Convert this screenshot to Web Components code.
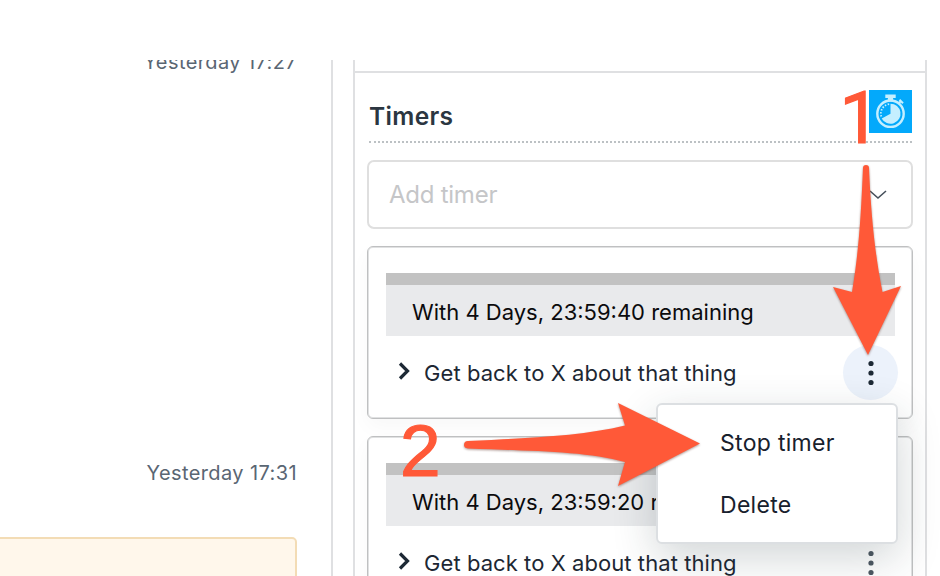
<!DOCTYPE html>
<html lang="en">
<head>
<meta charset="utf-8">
<title>Timers</title>
<style>
    body {
        margin: 0;
        background: #fff;
        font-family: Inter, "Liberation Sans", sans-serif;
        color: #1d2733;
    }
</style>
</head>
<body>
<timer-app></timer-app>
<script>
class MessageTime extends HTMLElement {
    constructor() {
        super();
        this.attachShadow({mode: 'open'}).innerHTML = `
        <style>
            :host {
                display: block;
                height: 28px;
                line-height: 28px;
                font-size: 20px;
                letter-spacing: 0.4px;
                color: #5a6673;
                text-align: right;
                white-space: nowrap;
            }
        </style>
        <slot></slot>`;
    }
}
customElements.define('message-time', MessageTime);

class MessageList extends HTMLElement {
    constructor() {
        super();
        this.attachShadow({mode: 'open'}).innerHTML = `
        <style>
            :host {
                display: flex;
                flex-direction: column;
                box-sizing: border-box;
                width: 333px;
                padding-right: 34px;
                border-right: 2px solid #dfe0e2;
            }
            .first { margin-top: -12px; }
            .second { margin-top: 383px; margin-bottom: 50px; }
            .note {
                box-sizing: border-box;
                height: 60px;
                margin-left: -10px;
                flex: none;
                background: #fff7eb;
                border: 2px solid #f3dcb5;
                border-radius: 5px;
            }
        </style>
        <message-time class="first">Yesterday 17:27</message-time>
        <message-time class="second">Yesterday 17:31</message-time>
        <div class="note"></div>`;
    }
}
customElements.define('message-list', MessageList);

class StopwatchIcon extends HTMLElement {
    constructor() {
        super();
        this.attachShadow({mode: 'open'}).innerHTML = `
        <style>
            :host { display: block; width: 43px; height: 43px; background: #03a9fb; }
            svg { display: block; }
        </style>
        <svg width="43" height="43" viewBox="0 0 43 43" fill="none">
            <path d="M16.300 4.500h10.400v3.500h-2.600v3.500h-5.200v-3.500h-2.600z" fill="#c5efff"/>
            <path d="M29.500 13.500l2.500-2.500M30.500 9.800l3.500 3.500" stroke="#c5efff" stroke-width="2"/>
            <circle cx="21.500" cy="23.700" r="13.200" stroke="#c5efff" stroke-width="2.400"/>
            <path d="M21.500 23.700V13.700a10 10 0 1 1-8.800 14.700z" fill="#c5efff"/>
            <path d="M12.300 26.500a9.600 9.600 0 0 1 9.200-12.500" stroke="#c5efff" stroke-width="1.800" stroke-dasharray="1.500 1.500"/>
        </svg>`;
    }
}
customElements.define('stopwatch-icon', StopwatchIcon);

class TimerSelect extends HTMLElement {
    constructor() {
        super();
        this.attachShadow({mode: 'open'}).innerHTML = `
        <style>
            :host {
                display: flex;
                align-items: center;
                justify-content: space-between;
                box-sizing: border-box;
                height: 69px;
                padding: 0 24px 0 20px;
                border: 2px solid #dfdfdf;
                border-radius: 7px;
                font-size: 24px;
                letter-spacing: -0.25px;
                color: #c5c6c8;
            }
        </style>
        <span><slot></slot></span>
        <svg width="18" height="10" viewBox="0 0 18 10" fill="none" stroke="#46505b" stroke-width="1.600"><path d="M1 1l8 7 8-7"/></svg>`;
    }
}
customElements.define('timer-select', TimerSelect);

class MoreButton extends HTMLElement {
    constructor() {
        super();
        this.attachShadow({mode: 'open'}).innerHTML = `
        <style>
            :host {
                display: grid;
                place-items: center;
                width: 55px;
                height: 55px;
                border-radius: 50%;
                color: #4d5862;
            }
            :host([active]) { background: #ecf2fb; color: #1d2935; }
        </style>
        <svg width="8" height="26" viewBox="0 0 8 26" fill="currentColor">
            <circle cx="4" cy="3.500" r="2.600"/><circle cx="4" cy="13" r="2.600"/><circle cx="4" cy="22.500" r="2.600"/>
        </svg>`;
    }
}
customElements.define('more-button', MoreButton);

class TimerCard extends HTMLElement {
    constructor() {
        super();
        this.attachShadow({mode: 'open'}).innerHTML = `
        <style>
            :host {
                display: block;
                box-sizing: border-box;
                height: 173px;
                flex: none;
                padding: 26px 14px 0 18px;
                border: 1px solid #bfc0c1;
                border-radius: 6px;
                background: #fff;
                box-shadow: inset 0 0 0 1px #e0e1e2, 0 8px 20px rgba(0, 0, 0, 0.03);
            }
            .remaining {
                box-sizing: border-box;
                height: 63px;
                margin-right: 3px;
                padding-left: 26px;
                border-top: 12px solid #c2c2c2;
                background: #e9eaec;
                color: #0b0b0d;
                font-size: 22px;
                line-height: 54px;
                white-space: nowrap;
            }
            .row {
                display: flex;
                align-items: center;
                height: 55px;
                margin-top: 9px;
                padding-left: 11px;
                font-size: 22px;
                letter-spacing: 0.07px;
                white-space: nowrap;
            }
            .row svg { margin: -4px 13px 0 0; }
            more-button { margin-left: auto; }
        </style>
        <div class="remaining"><slot name="remaining"></slot></div>
        <div class="row">
            <svg width="14" height="20" viewBox="0 0 14 20" fill="none" stroke="#1d2935" stroke-width="3.200"><path d="M3 2.500l7.500 7.500-7.500 7.500"/></svg>
            <span><slot></slot></span>
            <more-button></more-button>
        </div>`;
    }
    connectedCallback() {
        this.shadowRoot.querySelector('more-button').toggleAttribute('active', this.hasAttribute('active'));
    }
}
customElements.define('timer-card', TimerCard);

class TimerPanel extends HTMLElement {
    constructor() {
        super();
        this.attachShadow({mode: 'open'}).innerHTML = `
        <style>
            :host {
                display: block;
                box-sizing: border-box;
                width: 574px;
                margin-left: 20px;
                padding-top: 11px;
                border: 2px solid #dfe0e2;
                border-width: 0 2px;
            }
            section {
                display: flex;
                flex-direction: column;
                gap: 17px;
                padding: 17px 12px 0;
                border-top: 2px solid #dfe0e2;
            }
            header {
                display: flex;
                justify-content: space-between;
                box-sizing: border-box;
                height: 53px;
                margin: 0 1px 0 2px;
                border-bottom: 2px dotted #bcc1c4;
            }
            h2 {
                margin: 0;
                font-size: 24.500px;
                letter-spacing: 0.35px;
                line-height: 52px;
                font-weight: 600;
                color: #2b3641;
            }
        </style>
        <section>
            <header><h2>Timers</h2><stopwatch-icon></stopwatch-icon></header>
            <slot></slot>
        </section>`;
    }
}
customElements.define('timer-panel', TimerPanel);

class TimerMenu extends HTMLElement {
    constructor() {
        super();
        this.attachShadow({mode: 'open'}).innerHTML = `
        <style>
            :host {
                position: absolute;
                left: 656px;
                top: 403px;
                box-sizing: border-box;
                width: 242px;
                height: 141px;
                padding: 8px 0 0 62px;
                border: 2px solid #dcdfe2;
                border-radius: 6px;
                background: #fff;
                box-shadow: 0 14px 44px rgba(30, 50, 55, 0.2);
                font-size: 23px;
                letter-spacing: 0.3px;
                line-height: 61.500px;
                color: #18212d;
            }
            div { white-space: nowrap; }
        </style>
        <div>Stop timer</div>
        <div>Delete</div>`;
    }
}
customElements.define('timer-menu', TimerMenu);

// numbered arrows lying over the panel
class GuideMarks extends HTMLElement {
    constructor() {
        super();
        this.attachShadow({mode: 'open'}).innerHTML = `
        <style>
            :host { position: absolute; inset: 0; pointer-events: none; }
            svg { display: block; }
            text { font-family: "Liberation Sans", sans-serif; font-size: 73px; stroke: #ff5938; stroke-width: 1.2px; }
            .one { font-family: Roboto, sans-serif; font-size: 72px; }
            .arrow { filter: drop-shadow(0 1px 1px rgba(80, 30, 20, 0.45)); }
        </style>
        <svg width="940" height="576" viewBox="0 0 940 576" fill="#ff5938">
            <text class="one" x="839.500" y="142.500">1</text>
            <text x="400" y="475.500">2</text>
            <path class="arrow" d="M863 168Q863 165 866 165Q869 165 869 168C871 215 875 255 882.500 292L901 286L868 355L833 287L852 292C859 250 861 215 863 168Z"/>
            <path class="arrow" d="M468 441C530 438 582 436 625 425.500L618 403L700 443.500L618 486L625 462C585 451 530 451 468 448.500Q464 448 464 445Q464 441 468 441Z"/>
        </svg>`;
    }
}
customElements.define('guide-marks', GuideMarks);

class TimerApp extends HTMLElement {
    constructor() {
        super();
        this.attachShadow({mode: 'open'}).innerHTML = `
        <style>
            :host {
                display: block;
                position: relative;
                box-sizing: border-box;
                height: 576px;
                padding-top: 60px;
                overflow: hidden;
            }
            main { display: flex; height: 516px; overflow: hidden; }
        </style>
        <main>
            <message-list></message-list>
            <timer-panel>
                <timer-select>Add timer</timer-select>
                <timer-card active><span slot="remaining">With 4 Days, 23:59:40 remaining</span>Get back to X about that thing</timer-card>
                <timer-card><span slot="remaining">With 4 Days, 23:59:20 remaining</span>Get back to X about that thing</timer-card>
            </timer-panel>
        </main>
        <timer-menu></timer-menu>
        <guide-marks></guide-marks>`;
    }
}
customElements.define('timer-app', TimerApp);
</script>
</body>
</html>
